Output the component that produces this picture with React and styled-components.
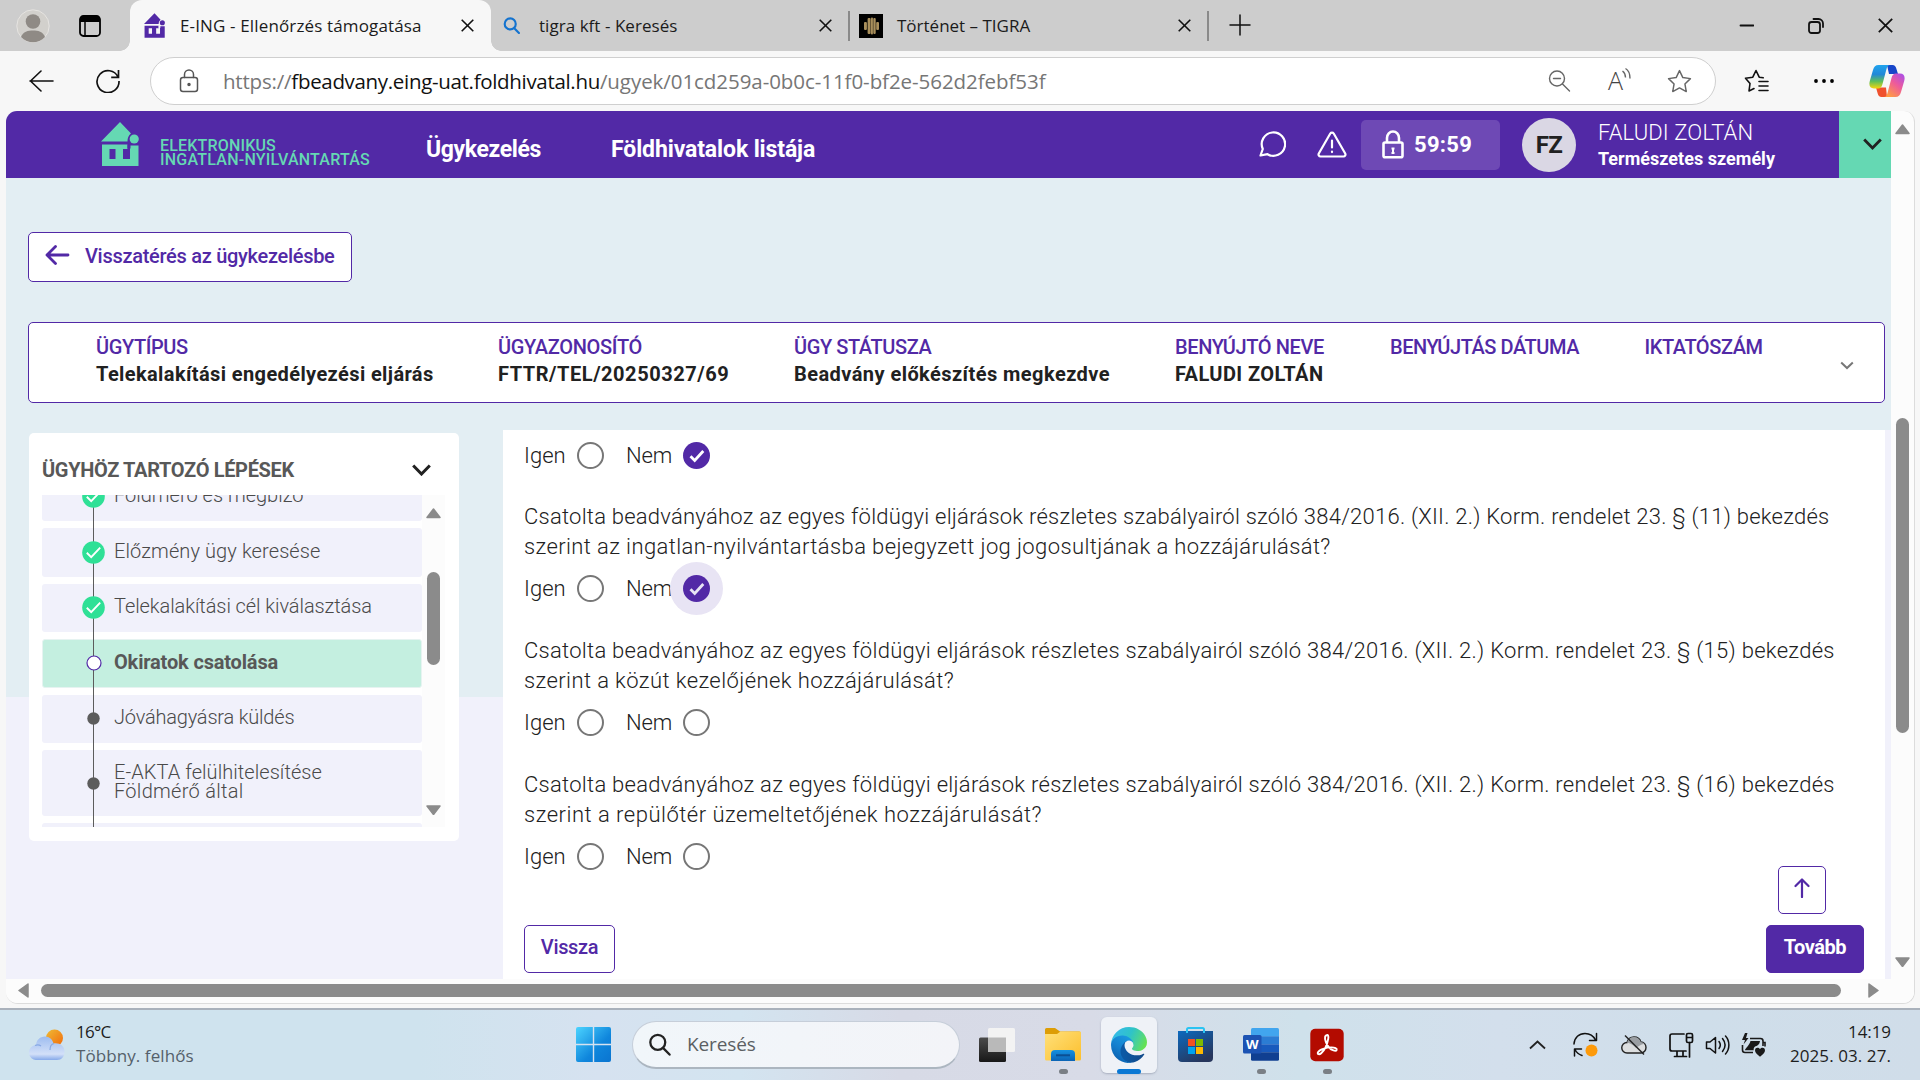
import React from "react";
import styled, { createGlobalStyle, css } from "styled-components";

const PURPLE = "#5229a6";
const MINT = "#65d8b3";
const INK = "#212121";
const SITE = `Roboto, "Open Sans", sans-serif`;
const SYSTEM = `"Open Sans", "Noto Sans", sans-serif`;

const GlobalStyle = createGlobalStyle`
  *, *::before, *::after { box-sizing: border-box; }
  body { margin: 0; width: 1920px; height: 1080px; overflow: hidden; background: #f7f7f7; }
  svg { display: block; flex: none; }
`;

const Text = styled.span`
  letter-spacing: ${(p) => p.$ls || 0}px;
  white-space: nowrap;
`;

const Screen = styled.div`
  width: 1920px;
  height: 1080px;
  display: flex;
  flex-direction: column;
  background: #f7f7f7;
  font-family: ${SYSTEM};
`;

/* ---------- browser chrome ---------- */

const TabStrip = styled.div`
  height: 51px;
  flex: none;
  display: flex;
  align-items: stretch;
  background: #cdcdcd;
`;

const StripTools = styled.div`
  width: 130px;
  display: flex;
  align-items: center;
  padding-left: 16px;
  gap: 29px;
`;

const Tab = styled.div`
  position: relative;
  width: ${(p) => p.$w}px;
  display: flex;
  align-items: center;
  padding-left: ${(p) => p.$pad}px;
  padding-right: ${(p) => p.$end || 0}px;
  color: #1b1b1b;
  font-size: 17px;
  ${(p) =>
    p.$active &&
    css`
      background: #f7f7f7;
      border-radius: 12px 12px 0 0;
      &::before,
      &::after {
        content: "";
        position: absolute;
        bottom: 0;
        width: 10px;
        height: 10px;
      }
      &::before {
        left: -10px;
        background: radial-gradient(circle at 0 0, transparent 9.5px, #f7f7f7 10px);
      }
      &::after {
        right: -10px;
        background: radial-gradient(circle at 100% 0, transparent 9.5px, #f7f7f7 10px);
      }
    `}
`;

const TabTitle = styled(Text)`
  flex: 1;
  margin-left: ${(p) => p.$gap}px;
`;

const TabRule = styled.div`
  width: 2px;
  height: 30px;
  align-self: center;
  background: #8a8a8a;
`;

const WindowButtons = styled.div`
  margin-left: auto;
  display: flex;
  align-items: center;
  gap: 54px;
  padding-right: 27px;
`;

const AddressBar = styled.div`
  height: 60px;
  flex: none;
  display: flex;
  align-items: center;
  padding: 0 15px 0 29px;
`;

const Reload = styled.svg`
  margin-left: 42px;
`;

const Dots = styled.svg`
  margin: 0 34px 0 44px;
`;

const Omnibox = styled.div`
  width: 1566px;
  height: 48px;
  margin-left: 30px;
  display: flex;
  align-items: center;
  padding: 0 23px 0 28px;
  background: #fff;
  border: 1.5px solid #cfcfcf;
  border-radius: 24px;
`;

const Url = styled.div`
  flex: 1;
  display: flex;
  margin-left: 24px;
  font-size: 20.5px;
  color: #767676;
  b {
    font-weight: 400;
    color: #111;
  }
`;

const OmniActions = styled.div`
  display: flex;
  align-items: center;
  gap: 36px;
`;

const BarActions = styled.div`
  display: flex;
  align-items: center;
  margin-left: auto;
`;

/* ---------- page frame ---------- */

const Frame = styled.div`
  height: 893px;
  width: 1909px;
  margin: 0 0 4px 6px;
  flex: none;
  display: grid;
  grid-template-columns: 1885px 23px;
  grid-template-rows: 868px 24px;
  background: #fcfcfc;
  border-right: 1px solid #dcdcdc;
  border-bottom: 1px solid #dcdcdc;
  border-radius: 11px 11px 12px 12px;
  overflow: hidden;
`;

const Page = styled.div`
  display: flex;
  flex-direction: column;
  overflow: hidden;
  font-family: ${SITE};
  background: linear-gradient(#e3eef3 586px, #f1f1fb 586px);
`;

const VTrack = styled.div`
  display: flex;
  flex-direction: column;
  align-items: center;
  padding: 13px 0 12px;
`;

const VThumb = styled.div`
  width: 13px;
  height: ${(p) => p.$h}px;
  margin: ${(p) => p.$top}px 0 auto;
  border-radius: 7px;
  background: #8b8b8b;
`;

const HTrack = styled.div`
  grid-column: 1 / 3;
  display: flex;
  align-items: center;
  padding: 0 35px 1px 12px;
  background: #fcfcfc;
`;

const HThumb = styled.div`
  width: 1800px;
  height: 13px;
  margin: 0 auto 0 12px;
  border-radius: 7px;
  background: #8b8b8b;
`;

/* ---------- site header ---------- */

const Header = styled.header`
  height: 67px;
  flex: none;
  display: flex;
  align-items: center;
  background: ${PURPLE};
  color: #fff;
`;

const Brand = styled.div`
  display: flex;
  align-items: flex-start;
  height: 67px;
  width: 420px;
  padding: 11px 0 0 95px;
`;

const BrandName = styled.div`
  display: flex;
  flex-direction: column;
  margin: 17px 0 0 21px;
  font-size: 16px;
  line-height: 14px;
  font-weight: 500;
  color: ${MINT};
`;

const NavLink = styled.a`
  width: ${(p) => p.$w}px;
  padding-top: 9px;
  font-size: 23px;
  font-weight: 700;
`;

const HeaderTools = styled.div`
  margin-left: auto;
  height: 67px;
  display: flex;
  align-items: center;
`;

const ChatIcon = styled.svg`
  margin: 0 31px 2px 0;
`;

const Timer = styled.div`
  width: 139px;
  height: 50px;
  margin: 0 22px 0 14px;
  display: flex;
  align-items: center;
  gap: 10px;
  padding-left: 21px;
  border-radius: 5px;
  background: #6e49b5;
  font-size: 22px;
  font-weight: 700;
`;

const Avatar = styled.div`
  width: 54px;
  height: 54px;
  margin-right: 22px;
  display: grid;
  place-items: center;
  border-radius: 50%;
  background: #dad7e4;
  color: ${INK};
  font-size: 24px;
  font-weight: 700;
`;

const User = styled.div`
  width: 241px;
  display: flex;
  flex-direction: column;
  line-height: 26px;
  padding-top: 3px;
`;

const UserName = styled(Text)`
  font-size: 22px;
  font-weight: 300;
`;

const UserKind = styled(Text)`
  font-size: 18px;
  font-weight: 700;
`;

const UserMenu = styled.div`
  width: 52px;
  height: 67px;
  display: grid;
  place-items: center;
  padding: 0 0 2px 15px;
  background: ${MINT};
`;

/* ---------- page body ---------- */

const Button = styled.button`
  display: flex;
  align-items: center;
  justify-content: center;
  height: ${(p) => p.$h || 48}px;
  width: ${(p) => p.$w}px;
  padding: 0 0 4px;
  border: 1px solid ${PURPLE};
  border-radius: 5px;
  background: ${(p) => (p.$primary ? PURPLE : "#fff")};
  color: ${(p) => (p.$primary ? "#fff" : PURPLE)};
  font: ${(p) => (p.$primary ? 700 : 500)} 20px ${SITE};
`;

const BackButton = styled(Button)`
  margin: 54px 0 40px 22px;
  flex: none;
  justify-content: flex-start;
  gap: 15px;
  padding: 0 0 2px 16px;
`;

const CaseCard = styled.section`
  width: 1857px;
  height: 81px;
  flex: none;
  margin-left: 22px;
  padding: 11px 0 0 67px;
  display: grid;
  grid-template-columns: 402px 296px 381px 215px 254.5px 195px 1fr;
  border: 1px solid ${PURPLE};
  border-radius: 5px;
  background: #fff;
`;

const Field = styled.div`
  display: flex;
  flex-direction: column;
  font-size: 20px;
  line-height: 27px;
`;

const FieldLabel = styled(Text)`
  font-weight: 500;
  color: ${PURPLE};
`;

const FieldValue = styled(Text)`
  font-weight: 700;
  color: ${INK};
`;

const CardToggle = styled.div`
  padding-top: 27px;
`;

const Columns = styled.div`
  flex: 1;
  display: flex;
  align-items: flex-start;
  padding: 27px 0 0 23px;
  background: linear-gradient(90deg, transparent 1879px, #f1f1fb 1879px) 0 27px no-repeat;
`;

const Steps = styled.aside`
  width: 430px;
  height: 408px;
  margin: 3px 44px 0 0;
  padding: 23px 0 0 13px;
  border-radius: 5px;
  background: #fff;
`;

const StepsHead = styled.div`
  display: flex;
  align-items: center;
  justify-content: space-between;
  height: 39px;
  padding: 0 28px 11px 0;
  font-size: 20px;
  font-weight: 700;
  color: #585858;
`;

const StepsBody = styled.div`
  display: flex;
  height: 332px;
`;

const StepList = styled.div`
  position: relative;
  width: 380px;
  height: 332px;
  overflow: hidden;
  display: flex;
  flex-direction: column;
  gap: 7px;
  &::after {
    content: "";
    position: absolute;
    left: 51px;
    top: 0;
    bottom: 0;
    width: 1px;
    background: #5c5c5c;
  }
  & > :first-child {
    margin-top: -22.5px;
  }
`;

const Step = styled.div`
  height: ${(p) => p.$h || 48.5}px;
  flex: none;
  display: flex;
  align-items: center;
  border-radius: 3px;
  background: ${(p) => (p.$current ? "#c4efe0" : "#f1f1fb")};
  border: ${(p) => (p.$current ? "1px solid #e6f3f1" : "0")};
  font-size: 20px;
  font-weight: ${(p) => (p.$current ? 700 : 300)};
  line-height: 19px;
  color: ${(p) => (p.$current ? "#585858" : "#4a4a4a")};
`;

const StepMark = styled.div`
  position: relative;
  z-index: 1;
  width: ${(p) => (p.$current ? 71 : 72)}px;
  padding-left: ${(p) => (p.$current ? 30 : 31)}px;
  display: grid;
  place-items: center;
`;

const StepText = styled.div`
  display: flex;
  flex-direction: column;
  padding-bottom: 2px;
`;

const ListTrack = styled(VTrack)`
  width: 23px;
  padding: 13px 0 12px;
  background: #fcfcfc;
`;

const Panel = styled.main`
  position: relative;
  width: 1382px;
  height: 549px;
  padding: 12px 21px 0 21px;
  background: #fff;
  color: ${INK};
  font-size: 22px;
  font-weight: 300;
`;

const Question = styled.p`
  display: flex;
  flex-direction: column;
  margin: ${(p) => (p.$first ? 33 : 34)}px 0 13px;
  line-height: 30px;
`;

const Answers = styled.div`
  display: flex;
  align-items: center;
  height: 27px;
`;

const AnswerLabel = styled(Text)`
  width: ${(p) => p.$w}px;
  padding-bottom: 1px;
`;

const Radio = styled.div`
  width: 27px;
  height: 27px;
  margin-right: 22px;
  display: grid;
  place-items: center;
  border-radius: 50%;
  border: 2px solid #777;
  ${(p) =>
    p.$on &&
    css`
      border: 0;
      background: ${PURPLE};
    `}
  ${(p) => p.$focus && "box-shadow: 0 0 0 13px #e8e4f4;"}
`;

const PanelActions = styled.div`
  display: flex;
  justify-content: space-between;
  margin-top: 55px;
`;

const ToTop = styled(Button)`
  position: absolute;
  right: 59px;
  top: 436px;
`;

/* ---------- taskbar ---------- */

const Taskbar = styled.footer`
  height: 72px;
  display: flex;
  align-items: center;
  padding-bottom: 1px;
  border-top: 2px solid #a9b1bb;
  background: linear-gradient(90deg, #cfe3ee 0, #cfe3ee 420px, #d6e2f0 600px, #d3e4f0 740px, #d7dae6 900px, #d8dbe7 1090px, #cfe1eb 1300px, #d3dfec 1500px, #cfdeea 1700px, #d0dde9 1920px);
  font-size: 17px;
`;

const Weather = styled.div`
  width: 576px;
  padding-left: 29px;
  display: flex;
  align-items: center;
  gap: 11px;
`;

const TwoLines = styled.div`
  display: flex;
  flex-direction: column;
  align-items: ${(p) => (p.$end ? "flex-end" : "flex-start")};
  line-height: 24px;
  padding-bottom: 1px;
  color: #1d1d1d;
`;

const Muted = styled(Text)`
  color: #55606a;
`;

const SearchBox = styled.div`
  width: 328px;
  height: 48px;
  margin: 0 4px 0 21px;
  padding: 0 0 0 15px;
  display: flex;
  align-items: center;
  gap: 16px;
  border-radius: 24px;
  border: 1px solid #c6ced9;
  border-bottom: 2px solid #acb6c0;
  background: linear-gradient(90deg, #f1f6fa, #f3f4f8);
  font-size: 19px;
  color: #5b5f63;
`;

const TaskCell = styled.div`
  position: relative;
  width: 66px;
  height: 56px;
  display: grid;
  place-items: center;
  &::before {
    content: "";
    position: absolute;
    inset: 0 5px;
    border-radius: 6px;
    background: ${(p) => (p.$active ? "rgba(244,246,250,.82)" : "transparent")};
    box-shadow: ${(p) => (p.$active ? "0 1px 2px rgba(120,130,150,.5)" : "none")};
  }
  &::after {
    content: "";
    position: absolute;
    bottom: -1px;
    width: ${(p) => (p.$active ? 24 : 9)}px;
    height: 5px;
    border-radius: 3px;
    background: ${(p) => (p.$active ? "#0a78d4" : p.$open ? "#7a7f85" : "transparent")};
  }
  svg {
    position: relative;
  }
`;

const Tray = styled.div`
  margin-left: auto;
  padding-right: 29px;
  display: flex;
  align-items: center;
`;

const TrayIcon = styled.div`
  margin-right: ${(p) => p.$gap}px;
`;

/* ---------- drawings ---------- */

const Cross = ({ s = 13, w = 1.6 }) => (
  <svg width={s} height={s} viewBox="0 0 13 13" stroke="#111" strokeWidth={w} fill="none">
    <path d="M.7.7l11.6 11.6M12.3.7L.7 12.3" />
  </svg>
);

const Chevron = ({ w, h, color, sw, up }) => (
  <svg width={w} height={h} viewBox={`0 0 ${w} ${h}`} fill="none" stroke={color} strokeWidth={sw}>
    <path d={up ? `M1 ${h - 1.5}L${w / 2} 1.5L${w - 1} ${h - 1.5}` : `M1.2 1.5L${w / 2} ${h - 2}L${w - 1.2} 1.5`} />
  </svg>
);

const ArrowHead = ({ dir }) => {
  const side = dir === "left" || dir === "right";
  const d = {
    up: "M7.5 1L14 9.5H1z",
    down: "M1 1H14L7.5 9.5z",
    left: "M10 1V14L1 7.5z",
    right: "M1 1V14L10 7.5z",
  }[dir];
  return (
    <svg width={side ? 11 : 15} height={side ? 15 : 10.5} viewBox={side ? "0 0 11 15" : "0 0 15 10.5"} fill="#8b8b8b" stroke="#8b8b8b" strokeWidth="1.5" strokeLinejoin="round">
      <path d={d} />
    </svg>
  );
};

const HouseLogo = ({ w, h, color, bg }) => (
  <svg width={w} height={h} viewBox="0 0 38 44" fill={color}>
    <path d="M19 0L0 19.500H26.500C26.500 16 27.500 13.500 30 11.500z" />
    <circle cx="33.2" cy="17" r="4.6" />
    <path d="M1 22.500H26.500V26.500H29.500V23.500H37.500V44H1z" />
    <path d="M8.500 27h6v10h-6zM22 27h7v10h-7zM26.500 22.500h2.500v5h-2.500z" fill={bg} />
  </svg>
);

const PersonIcon = () => (
  <svg width="34" height="34" viewBox="0 0 34 34">
    <circle cx="17" cy="17" r="16.2" fill="#d2d0cc" stroke="#e6e4e1" />
    <circle cx="17" cy="12.5" r="7.3" fill="#8f8a85" />
    <path d="M5 28c2-5.500 7-6.500 12-6.500s10 1 12 6.500c-3 3.500-8 5.200-12 5.200S8 31.500 5 28z" fill="#8f8a85" />
  </svg>
);

const WorkspaceIcon = () => (
  <svg width="22" height="22" viewBox="0 0 22 22">
    <rect x="1" y="1" width="20" height="20" rx="3.5" fill="none" stroke="#000" strokeWidth="1.8" />
    <path d="M1 7V4a3 3 0 013-3h14a3 3 0 013 3v3z" />
    <path d="M6 7v14" stroke="#000" strokeWidth="1.5" />
  </svg>
);

const SearchGlyph = ({ s, color, w }) => (
  <svg width={s} height={s} viewBox="0 0 16 16" fill="none" stroke={color} strokeWidth={w} strokeLinecap="round">
    <circle cx="6.8" cy="6.5" r="5.2" />
    <path d="M10.6 10.5L15 15" />
  </svg>
);

const TigraIcon = () => (
  <svg width="24" height="24" viewBox="0 0 24 24">
    <path d="M0 0h24v24H0z" />
    <g fill="#a98f5b">
      <rect x="5" y="8" width="2.9" height="8" rx="1" />
      <rect x="8.6" y="4" width="3" height="16" rx="1" />
      <rect x="12" y="3.5" width="1.9" height="17" rx=".8" />
      <rect x="14.3" y="4" width="2.4" height="16" rx="1" />
      <rect x="17.2" y="8" width="2.8" height="8" rx="1" />
    </g>
  </svg>
);

const Line = ({ w = 24, h = 24, vb, sw = 1.6, color = "#111", children }) => (
  <svg width={w} height={h} viewBox={vb || `0 0 ${w} ${h}`} fill="none" stroke={color} strokeWidth={sw} strokeLinecap="round" strokeLinejoin="round">
    {children}
  </svg>
);

const STAR = "M12 1.500l3.200 6.700 7.300 1-5.300 5.100 1.300 7.300L12 18.100l-6.500 3.500 1.300-7.300L1.500 9.200l7.300-1z";

const CopilotIcon = () => (
  <svg width="36" height="32" viewBox="0 0 36 32">
    <defs>
      <linearGradient id="cpA" x1="0" y1="0" x2="0" y2="1">
        <stop offset="0" stopColor="#1fa4ee" />
        <stop offset=".4" stopColor="#2288d8" />
        <stop offset=".7" stopColor="#5fbf5a" />
        <stop offset="1" stopColor="#f5d60c" />
      </linearGradient>
      <linearGradient id="cpB" x1="1" y1="0" x2="0.3" y2="1">
        <stop offset="0" stopColor="#a44df0" />
        <stop offset=".5" stopColor="#ee5b9a" />
        <stop offset="1" stopColor="#ff9b45" />
      </linearGradient>
    </defs>
    <path d="M18 0h5.500c2.200 0 3.200 1.200 3.800 3.500L29 9h-9z" fill="#1746c9" />
    <path d="M18 32h-5.500c-2.200 0-3.200-1.200-3.800-3.500L7 22.500h10z" fill="#f0512e" />
    <path d="M9.500 0H21c-2 0-3 2-3.500 4L13.500 19c-.8 3-2 4.500-4.500 4.500H5c-4 0-5.400-3-4.200-7.500L4 5C5 1.700 6.500 0 9.500 0z" fill="url(#cpA)" />
    <path d="M26.500 32H15c2 0 3-2 3.500-4L22.500 13c.8-3 2-4.500 4.500-4.500h4c4 0 5.400 3 4.200 7.500L32 27c-1 3.300-2.500 5-5.500 5z" fill="url(#cpB)" />
  </svg>
);

const DoneMark = () => (
  <svg width="23" height="23" viewBox="0 0 23 23">
    <circle cx="11.5" cy="11.5" r="11.3" fill="#2fe096" />
    <path d="M4.800 11.800l4.400 4.300 9-9.400" fill="none" stroke="#fff" strokeWidth="1.9" />
  </svg>
);

const CurrentMark = () => (
  <svg width="16" height="16" viewBox="0 0 16 16">
    <circle cx="8" cy="8" r="7" fill="#fff" stroke={PURPLE} strokeWidth="1.2" />
  </svg>
);

const DotMark = () => (
  <svg width="13" height="13" viewBox="0 0 13 13">
    <circle cx="6.5" cy="6.5" r="6.2" fill="#5c5c5c" />
  </svg>
);

const Check = ({ soft }) => (
  <svg width="16" height="14" viewBox="0 0 16 14" fill="none" stroke={soft ? "#e8e4f4" : "#fff"} strokeWidth="2.8">
    <path d="M1.500 7.200l4.200 4.200L14.300 2" />
  </svg>
);

const LockIcon = () => (
  <svg width="22" height="29" viewBox="0 0 22 29" fill="none" stroke="#fff" strokeWidth="2.6">
    <path d="M5 12.500V8a6 6.500 0 0112 0v4.500" />
    <rect x="1.5" y="12.5" width="19" height="14.7" rx="1.5" />
    <path d="M11 17.500v6M9.500 18.500h3M9.500 23h3" strokeWidth="2" />
  </svg>
);

const WeatherIcon = () => (
  <svg width="36" height="31" viewBox="0 0 36 31">
    <defs>
      <linearGradient id="sun" x1="0" y1="0" x2="1" y2="1">
        <stop offset="0" stopColor="#eebb35" />
        <stop offset="1" stopColor="#f26a0c" />
      </linearGradient>
      <linearGradient id="cloud" x1="0" y1="0" x2="0" y2="1">
        <stop offset="0" stopColor="#9dbcf0" />
        <stop offset=".75" stopColor="#d3e0f8" />
        <stop offset="1" stopColor="#86a9ea" />
      </linearGradient>
    </defs>
    <circle cx="25.5" cy="9" r="8.5" fill="url(#sun)" />
    <path d="M8 31a7.500 7.500 0 01-1-15C7.500 11 11 7.500 16 7.500c4.500 0 7.500 3 8.500 7 6-1 11 2.500 11 8 0 5-3 8.500-7.500 8.500z" fill="url(#cloud)" />
    <path d="M12 17c-2-1.500-4-1.500-6-.5M21 21c0-4 1.500-6 4-6.500" fill="none" stroke="#86a8e4" strokeWidth="1.2" />
  </svg>
);

const WindowsIcon = () => (
  <svg width="35" height="35" viewBox="0 0 35 35">
    <defs>
      <linearGradient id="win" x1="0" y1="0" x2="1" y2="1">
        <stop offset="0" stopColor="#4cd4ff" />
        <stop offset=".6" stopColor="#0f86dc" />
        <stop offset="1" stopColor="#0a74d0" />
      </linearGradient>
    </defs>
    <path d="M2 0h14.800v16.800H0V2a2 2 0 012-2zM18.200 0H33a2 2 0 012 2v14.800H18.200zM0 18.200h16.800V35H2a2 2 0 01-2-2zM18.200 18.200H35V33a2 2 0 01-2 2H18.200z" fill="url(#win)" />
  </svg>
);

const TaskViewIcon = () => (
  <svg width="36" height="34" viewBox="0 0 36 34">
    <defs>
      <linearGradient id="tv" x1="0" y1="0" x2="0" y2="1">
        <stop offset="0" stopColor="#4b4b4b" />
        <stop offset="1" stopColor="#181818" />
      </linearGradient>
    </defs>
    <rect x="0" y="9.5" width="27" height="24.5" rx="1.5" fill="url(#tv)" />
    <rect x="9" y="0" width="27" height="24" rx="1.5" fill="#f3f3f3" />
    <path d="M9 9.500h18V24H9z" fill="#b9b9b9" />
  </svg>
);

const FolderIcon = () => (
  <svg width="36" height="33" viewBox="0 0 36 33">
    <defs>
      <linearGradient id="fold" x1="0" y1="0" x2="1" y2="1">
        <stop offset="0" stopColor="#ffe07a" />
        <stop offset="1" stopColor="#fcbf2d" />
      </linearGradient>
      <linearGradient id="foldB" x1="0" y1="0" x2="0" y2="1">
        <stop offset="0" stopColor="#1591e0" />
        <stop offset="1" stopColor="#0b63b5" />
      </linearGradient>
    </defs>
    <path d="M0 1.500A1.500 1.500 0 011.500 0H10l5 3.500h20L30 9H0z" fill="#dd9d06" />
    <path d="M0 6h12l3.500-2.500H35a1 1 0 011 1V31a1.500 1.500 0 01-1.500 1.500h-33A1.500 1.500 0 010 31z" fill="url(#fold)" />
    <path d="M6 33v-7a4 4 0 014-4h16a4 4 0 014 4v7z" fill="url(#foldB)" />
    <path d="M11 27.300h14" stroke="#0b4f93" strokeWidth="2" />
  </svg>
);

const EdgeIcon = () => (
  <svg width="36" height="36" viewBox="0 0 256 256">
    <defs>
      <linearGradient id="eA" x1=".2" y1=".7" x2=".9" y2=".7">
        <stop offset="0" stopColor="#0c59a4" />
        <stop offset="1" stopColor="#114a8b" />
      </linearGradient>
      <linearGradient id="eB" x1=".7" y1="0" x2=".2" y2="1">
        <stop offset="0" stopColor="#1b9de2" />
        <stop offset=".5" stopColor="#1480cf" />
        <stop offset="1" stopColor="#0a5cab" />
      </linearGradient>
      <linearGradient id="eC" x1="0" y1=".3" x2="1" y2=".6">
        <stop offset="0" stopColor="#35b9ec" />
        <stop offset=".5" stopColor="#2fc3c8" />
        <stop offset=".8" stopColor="#4ed58a" />
        <stop offset="1" stopColor="#66e24f" />
      </linearGradient>
    </defs>
    <path fill="url(#eA)" d="M231 190.5c-3.4 1.8-6.9 3.4-10.5 4.7a101.5 101.5 0 0 1-35.9 6.4c-47.3 0-88.5-32.5-88.5-74.3a31.5 31.5 0 0 1 16.4-27.3c-42.8 1.8-53.800 46.4-53.800 72.5 0 74 68.1 81.4 82.8 81.4 7.9 0 19.8-2.3 27-4.6l1.3-.4a128.3 128.3 0 0 0 66.6-52.8 4 4 0 0 0-5.4-5.6z" />
    <path fill="url(#eB)" d="M105.7 241.4a79.2 79.2 0 0 1-22.7-21.3 80.7 80.7 0 0 1 29.5-120c3.2-1.5 8.5-4.1 15.6-4a32.4 32.4 0 0 1 25.7 13 31.9 31.9 0 0 1 6.3 18.7c0-.2 24.5-79.6-80-79.6-43.9 0-80 41.6-80 78.2a130.2 130.2 0 0 0 12.1 56 128 128 0 0 0 156.4 67 75.5 75.5 0 0 1-62.8-8z" />
    <path fill="url(#eC)" d="M152.300 148.900c-.9 1-3.4 2.5-3.4 5.6 0 2.6 1.700 5.1 4.7 7.2 14.400 10 41.500 8.700 41.600 8.700a59.600 59.600 0 0 0 30.300-8.300 61.400 61.400 0 0 0 30.400-52.900c.3-22.400-8-37.300-11.300-43.900C223.500 23.900 177.700 0 128 0A128 128 0 0 0 0 126.200c.5-36.500 36.800-66 80-66 3.500 0 23.500.3 42 10.100 16.300 8.600 24.900 19 30.800 29.300 6.200 10.700 7.300 24.100 7.300 29.500s-2.700 13.300-7.800 19.900z" />
  </svg>
);

const StoreIcon = () => (
  <svg width="35" height="35" viewBox="0 0 35 35">
    <defs>
      <linearGradient id="store" x1="0" y1="0" x2=".6" y2="1">
        <stop offset="0" stopColor="#0c6abf" />
        <stop offset="1" stopColor="#27365c" />
      </linearGradient>
    </defs>
    <path d="M9 6V2.500A1.500 1.500 0 0110.500 1h14A1.500 1.500 0 0126 2.500V6" fill="none" stroke="#2bc3f2" strokeWidth="2" />
    <path d="M0 4h35v27a4 4 0 01-4 4H4a4 4 0 01-4-4z" fill="url(#store)" />
    <path d="M9 6V4M26 6V4" stroke="#2bc3f2" strokeWidth="2" />
    <path d="M10 12h7v7h-7z" fill="#f25022" />
    <path d="M18 12h7v7h-7z" fill="#7fba00" />
    <path d="M10 20h7v7h-7z" fill="#00a4ef" />
    <path d="M18 20h7v7h-7z" fill="#ffb900" />
  </svg>
);

const WordIcon = () => (
  <svg width="36" height="33" viewBox="0 0 36 33">
    <path d="M8 1.500A1.500 1.500 0 019.500 0h25A1.500 1.500 0 0136 1.500V8.500H8z" fill="#41a5ee" />
    <path d="M8 8.300h28v8H8z" fill="#2b7cd3" />
    <path d="M8 16.300h28v8H8z" fill="#185abd" />
    <path d="M8 24.300h28v7a1.500 1.500 0 01-1.500 1.500h-25A1.500 1.500 0 018 31.300z" fill="#103f91" />
    <rect x="0" y="7" width="18.5" height="18.5" rx="1.5" fill="#1c53b3" />
    <text x="9.2" y="21" textAnchor="middle" fontFamily="Open Sans, sans-serif" fontWeight="700" fontSize="13" fill="#fff">W</text>
  </svg>
);

const AcrobatIcon = () => (
  <svg width="34" height="34" viewBox="0 0 34 34">
    <rect x=".3" y=".8" width="33.4" height="32.5" rx="5" fill="#b30b00" />
    <path d="M16.200 7.500c1.800-1.500 2.600.5 2 3.500-.9 5-4 11.500-7 14.200-2 1.800-4 1-3.300-.8 1.300-3 8.500-5 13.500-5 3.500 0 5.800 1 5.300 2.400-.8 2-5.200.5-7.600-2.200-2.800-3-4.600-8.500-4-10.900.2-.6.600-1 1.100-1.200z" fill="none" stroke="#fff" strokeWidth="1.9" />
  </svg>
);

const SyncIcon = () => (
  <Line w={25} h={25} sw={1.5}>
    <path d="M1 12C1.500 5.500 6 1.500 12 1.500c5 0 8.500 2.500 10.500 6.500M23.500 1.500v7h-7M1.500 24v-7h7M2 17.500c1.500 3 4 5 7 6" />
    <circle cx="18.5" cy="18.5" r="6" fill="#fd9a0b" stroke="none" />
  </Line>
);

const CloudOffIcon = () => (
  <svg width="26" height="20" viewBox="0 0 26 20" fill="none" stroke="#222" strokeWidth="1.4">
    <path d="M6 18a5 5 0 010-10.500C7 4 9.500 2 13 2s6 2 6.800 5c3.200.2 5.200 2.800 5.200 5.500s-2 5.500-5 5.500z" fill="#dcdedf" />
    <path d="M6 7.500C7 4 9.500 2 13 2s6 2 6.800 5c1.500.2 2.700.8 3.700 1.800-4 .7-7 3.200-8.500 4.200-3-3.500-6-4.500-9-5.500z" fill="#9b9fa3" stroke="none" />
    <path d="M4 .5l19 19" />
  </svg>
);

const MonitorIcon = () => (
  <Line w={26} h={26} sw={1.7}>
    <path d="M16 2H4a2 2 0 00-2 2v13a2 2 0 002 2h14M9 19v5M15 19v5M6.500 24.500h12" />
    <rect x="18.5" y="1.5" width="6" height="9" rx="1.5" />
    <path d="M21.500 10.500V25M19 5.500h5" />
  </Line>
);

const SpeakerIcon = () => (
  <Line w={25} h={22} sw={1.5}>
    <path d="M1.500 8v6.500H5l5.500 4.500V3.500L5 8zM14 7.500c1.500 2 1.500 5 0 7M17.500 4.500c3.200 4 3.200 9 0 13M20.500 2c4.500 5 4.500 13 0 18" />
  </Line>
);

const BatteryIcon = () => (
  <svg width="25" height="24" viewBox="0 0 25 24">
    <path d="M9 5.500h10.500A2.500 2.500 0 0122 8v5M1.500 12v5A2.500 2.500 0 004 19.500h8M22 9.500h2v4" fill="none" stroke="#1a1a1a" strokeWidth="1.6" />
    <path d="M9.500 8h9.500c-.5 4-3 5-5 5.500-1 .8-1.500 2-1.300 3.800H3.800c1.200-3 4.700-5 5.700-9.300z" fill="#1a1a1a" />
    <path d="M4 0L1 7h3L2.500 11.500 7.500 5H5L6.500 0z" fill="#1a1a1a" />
    <path d="M19 23.700c-3-2.500-5-4.200-5-6.500 0-2.800 3.600-3.300 5-1 1.400-2.300 5-1.800 5 1 0 2.300-2 4-5 6.500z" fill="#1a1a1a" />
  </svg>
);

/* ---------- data ---------- */

const fields = [
  { label: "ÜGYTÍPUS", ls: -0.4, value: "Telekalakítási engedélyezési eljárás", vls: 0.39 },
  { label: "ÜGYAZONOSÍTÓ", ls: -0.32, value: "FTTR/TEL/20250327/69", vls: 0.54 },
  { label: "ÜGY STÁTUSZA", ls: -0.4, value: "Beadvány előkészítés megkezdve", vls: 0.44 },
  { label: "BENYÚJTÓ NEVE", ls: -0.36, value: "FALUDI ZOLTÁN", vls: 0.4 },
  { label: "BENYÚJTÁS DÁTUMA", ls: -0.44 },
  { label: "IKTATÓSZÁM", ls: -0.43 },
];

const steps = [
  { lines: [["Földmérő és megbízó", 0]], state: "done" },
  { lines: [["Előzmény ügy keresése", 0.1]], state: "done" },
  { lines: [["Telekalakítási cél kiválasztása", -0.08]], state: "done" },
  { lines: [["Okiratok csatolása", -0.17]], state: "current" },
  { lines: [["Jóváhagyásra küldés", -0.2]], state: "todo" },
  { lines: [["E-AKTA felülhitelesítése", 0.06], ["Földmérő által", 0.3]], state: "todo", h: 66 },
  { lines: [], state: "none" },
];

const marks = { done: <DoneMark />, current: <CurrentMark />, todo: <DotMark />, none: null };

const lead = "Csatolta beadványához az egyes földügyi eljárások részletes szabályairól szóló 384/2016. (XII. 2.) Korm. rendelet 23. § ";
const questions = [
  { ref: "(11) bekezdés", end: "szerint az ingatlan-nyilvántartásba bejegyzett jog jogosultjának a hozzájárulását?", l1: 0.24, ls: 0.39, no: true, focus: true },
  { ref: "(15) bekezdés", end: "szerint a közút kezelőjének hozzájárulását?", l1: 0.28, ls: 0.4 },
  { ref: "(16) bekezdés", end: "szerint a repülőtér üzemeltetőjének hozzájárulását?", l1: 0.28, ls: 0.5 },
];

function YesNo({ no, focus }) {
  return (
    <Answers>
      <AnswerLabel $w={53} $ls={0.05}>Igen</AnswerLabel>
      <Radio />
      <AnswerLabel $w={57} $ls={-0.1}>Nem</AnswerLabel>
      <Radio $on={no} $focus={focus}>{no && <Check soft={focus} />}</Radio>
    </Answers>
  );
}

function Browser() {
  return (
    <>
      <TabStrip>
        <StripTools>
          <PersonIcon />
          <WorkspaceIcon />
        </StripTools>
        <Tab $active $w={361} $pad={14} $end={17}>
          <HouseLogo w={21} h={25} color={PURPLE} bg="#f7f7f7" />
          <TabTitle $gap={15} $ls={0.14}>E-ING - Ellenőrzés támogatása</TabTitle>
          <Cross />
        </Tab>
        <Tab $w={357} $pad={12} $end={16}>
          <SearchGlyph s={17} color="#1473cf" w={2} />
          <TabTitle $gap={19} $ls={0.04}>tigra kft - Keresés</TabTitle>
          <Cross />
        </Tab>
        <TabRule />
        <Tab $w={357} $pad={9} $end={16}>
          <TigraIcon />
          <TabTitle $gap={14}>Történet – TIGRA</TabTitle>
          <Cross />
        </Tab>
        <TabRule />
        <Tab $w={60} $pad={20}>
          <Line w={22} h={24} sw={1.5}><path d="M11 1v20M1 11h20" /></Line>
        </Tab>
        <WindowButtons>
          <Line w={15} h={16} sw={1.8}><path d="M1.500 7.500h13" /></Line>
          <Line w={16} h={16} sw={1.8}>
            <rect x="1" y="4" width="11" height="11" rx="2.5" />
            <path d="M5.500 1h5A4.500 4.500 0 0115 5.500V9" />
          </Line>
          <Cross s={15} w={1.5} />
        </WindowButtons>
      </TabStrip>
      <AddressBar>
        <Line w={25} h={22}><path d="M1 11h23M12 1L1.500 11 12 21" /></Line>
        <Reload width="24" height="24" viewBox="0 0 24 24" fill="none" stroke="#111" strokeWidth="1.7">
          <path d="M22 8A11 11 0 1023 12M22.500 1v7.300h-7.300" />
        </Reload>
        <Omnibox>
          <Line w={20} h={24} sw={1.5} color="#555">
            <rect x="1.5" y="8.5" width="17" height="14" rx="2.5" />
            <path d="M5.500 8.500V5.500a4.500 4.500 0 019 0v3" />
            <circle cx="10" cy="15.5" r="1" fill="#555" />
          </Line>
          <Url>
            <Text $ls={-0.2}>https://</Text>
            <b><Text $ls={-0.32}>fbeadvany.eing-uat.foldhivatal.hu</Text></b>
            <Text $ls={-0.06}>/ugyek/01cd259a-0b0c-11f0-bf2e-562d2febf53f</Text>
          </Url>
          <OmniActions>
            <Line w={23} h={22} sw={1.4} color="#666">
              <circle cx="9" cy="8.5" r="7.5" />
              <path d="M14.500 14l7 7M5.500 8.500h7" />
            </Line>
            <svg width="24" height="36" viewBox="0 -5 24 36" fill="none" stroke="#666" strokeWidth="1.4">
              <text x="1" y="21.5" fontFamily="Open Sans, sans-serif" fontWeight="300" fontSize="25" fill="#444" stroke="none">A</text>
              <path d="M15.500 3c2 1.500 3 3.500 3 6.500M18.500 .5c3.500 2 4.500 5.500 4.500 10" />
            </svg>
            <Line w={25} h={24} vb="0 0 24 23" sw={1.4} color="#666"><path d={STAR} /></Line>
          </OmniActions>
        </Omnibox>
        <BarActions>
          <Line w={25} h={24}>
            <path d="M10 19.500L5 22l1-7.500L1.500 9.200l7.300-1L12 1.500l3.200 6.700 4 .6M15 12.500h9M15 17h9M15 21.500h9" />
          </Line>
          <Dots width="22" height="6" viewBox="0 0 22 6">
            <circle cx="3" cy="3" r="1.9" /><circle cx="11" cy="3" r="1.9" /><circle cx="19" cy="3" r="1.9" />
          </Dots>
          <CopilotIcon />
        </BarActions>
      </AddressBar>
    </>
  );
}

function SiteHeader() {
  return (
    <Header>
      <Brand>
        <HouseLogo w={38} h={44} color={MINT} bg={PURPLE} />
        <BrandName>
          <Text $ls={0.18}>ELEKTRONIKUS</Text>
          <Text $ls={0.23}>INGATLAN-NYILVÁNTARTÁS</Text>
        </BrandName>
      </Brand>
      <NavLink $w={185}><Text $ls={-0.36}>Ügykezelés</Text></NavLink>
      <NavLink $w={220}><Text $ls={-0.12}>Földhivatalok listája</Text></NavLink>
      <HeaderTools>
        <ChatIcon width="27" height="27" viewBox="0 0 27 27" fill="none" stroke="#fff" strokeWidth="2.2" strokeLinejoin="round">
          <path d="M3.800 19A11.700 11.700 0 118.500 24.200L1.500 25.500z" />
        </ChatIcon>
        <Line w={30} h={28} color="#fff" sw={2.2}>
          <path d="M13.300 2.500L1.800 22.500a2 2 0 001.700 3h23a2 2 0 001.700-3L16.700 2.500a2 2 0 00-3.400 0zM15 9.500v7M15 20.500v.6" />
        </Line>
        <Timer>
          <LockIcon />
          <Text $ls={0.3}>59:59</Text>
        </Timer>
        <Avatar><Text $ls={-0.6}>FZ</Text></Avatar>
        <User>
          <UserName $ls={0.13}>FALUDI ZOLTÁN</UserName>
          <UserKind $ls={0.02}>Természetes személy</UserKind>
        </User>
        <UserMenu><Chevron w={19} h={12} color={INK} sw={2.8} /></UserMenu>
      </HeaderTools>
    </Header>
  );
}

function StepsCard() {
  return (
    <Steps>
      <StepsHead>
        <Text $ls={-0.34}>ÜGYHÖZ TARTOZÓ LÉPÉSEK</Text>
        <Chevron w={19} h={12} color={INK} sw={3} />
      </StepsHead>
      <StepsBody>
        <StepList>
          {steps.map((s, i) => (
            <Step key={i} $h={s.h} $current={s.state === "current"}>
              <StepMark $current={s.state === "current"}>{marks[s.state]}</StepMark>
              <StepText>
                {s.lines.map(([t, ls]) => <Text key={t} $ls={ls}>{t}</Text>)}
              </StepText>
            </Step>
          ))}
        </StepList>
        <ListTrack>
          <ArrowHead dir="up" />
          <VThumb $h={93} $top={53} />
          <ArrowHead dir="down" />
        </ListTrack>
      </StepsBody>
    </Steps>
  );
}

export default function App() {
  return (
    <Screen>
      <GlobalStyle />
      <Browser />
      <Frame>
        <Page>
          <SiteHeader />
          <BackButton $w={324} $h={50}>
            <Line w={25} h={22} color={PURPLE} sw={2.8}><path d="M2 10h21M10.500 1.500L2 10l8.500 8.500" /></Line>
            <Text $ls={-0.29}>Visszatérés az ügykezelésbe</Text>
          </BackButton>
          <CaseCard>
            {fields.map((f) => (
              <Field key={f.label}>
                <FieldLabel $ls={f.ls}>{f.label}</FieldLabel>
                {f.value && <FieldValue $ls={f.vls}>{f.value}</FieldValue>}
              </Field>
            ))}
            <CardToggle><Chevron w={14} h={9} color="#777" sw={2} /></CardToggle>
          </CaseCard>
          <Columns>
            <StepsCard />
            <Panel>
              <YesNo no />
              {questions.map((q, i) => (
                <React.Fragment key={q.ref}>
                  <Question $first={i === 0}>
                    <Text $ls={q.l1}>{lead}{q.ref}</Text>
                    <Text $ls={q.ls}>{q.end}</Text>
                  </Question>
                  <YesNo no={q.no} focus={q.focus} />
                </React.Fragment>
              ))}
              <PanelActions>
                <Button $w={91}><Text $ls={-0.35}>Vissza</Text></Button>
                <Button $w={98} $primary><Text $ls={-0.45}>Tovább</Text></Button>
              </PanelActions>
              <ToTop $w={48}>
                <Line w={16} h={20} color={PURPLE} sw={2.2}><path d="M8 19V2M1.500 8L8 1.500 14.500 8" /></Line>
              </ToTop>
            </Panel>
          </Columns>
        </Page>
        <VTrack>
          <ArrowHead dir="up" />
          <VThumb $h={315} $top={283} />
          <ArrowHead dir="down" />
        </VTrack>
        <HTrack>
          <ArrowHead dir="left" />
          <HThumb />
          <ArrowHead dir="right" />
        </HTrack>
      </Frame>
      <Taskbar>
        <Weather>
          <WeatherIcon />
          <TwoLines>
            <Text $ls={-0.7}>16°C</Text>
            <Muted $ls={0.08}>Többny. felhős</Muted>
          </TwoLines>
        </Weather>
        <WindowsIcon />
        <SearchBox>
          <SearchGlyph s={23} color="#222" w={1.6} />
          <Text $ls={-0.1}>Keresés</Text>
        </SearchBox>
        <TaskCell><TaskViewIcon /></TaskCell>
        <TaskCell $open><FolderIcon /></TaskCell>
        <TaskCell $active><EdgeIcon /></TaskCell>
        <TaskCell><StoreIcon /></TaskCell>
        <TaskCell $open><WordIcon /></TaskCell>
        <TaskCell $open><AcrobatIcon /></TaskCell>
        <Tray>
          <TrayIcon $gap={27}><Chevron w={17} h={10} color="#222" sw={1.8} up /></TrayIcon>
          <TrayIcon $gap={23}><SyncIcon /></TrayIcon>
          <TrayIcon $gap={21}><CloudOffIcon /></TrayIcon>
          <TrayIcon $gap={11}><MonitorIcon /></TrayIcon>
          <TrayIcon $gap={11}><SpeakerIcon /></TrayIcon>
          <TrayIcon $gap={24}><BatteryIcon /></TrayIcon>
          <TwoLines $end>
            <Text $ls={-0.07}>14:19</Text>
            <Text $ls={0.08}>2025. 03. 27.</Text>
          </TwoLines>
        </Tray>
      </Taskbar>
    </Screen>
  );
}
